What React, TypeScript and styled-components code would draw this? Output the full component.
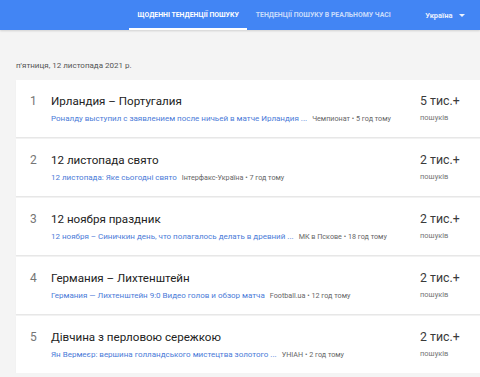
import styled, { createGlobalStyle } from "styled-components";

const GlobalStyle = createGlobalStyle`
  html, body {
    margin: 0;
    padding: 0;
    background: #f4f4f4;
    font-family: Roboto, "Noto Sans", Arial, sans-serif;
    overflow: hidden;
  }
`;

const Header = styled.header`
  height: 30px;
  background: #4285f4;
  display: flex;
  align-items: stretch;
  padding-left: 129px;
  box-shadow: 0 1px 2px rgba(0, 0, 0, 0.15);
`;

const Tab = styled.div<{ $active?: boolean }>`
  display: flex;
  align-items: center;
  padding: 0 8.5px;
  font-size: 6.9px;
  font-weight: 700;
  text-transform: uppercase;
  white-space: nowrap;
  color: ${(p) => (p.$active ? "#ffffff" : "rgba(255,255,255,0.72)")};
  border-bottom: 2px solid ${(p) => (p.$active ? "#ffffff" : "transparent")};
  box-sizing: border-box;
  padding-top: 1px;
`;

const Region = styled.div`
  display: flex;
  align-items: center;
  gap: 7px;
  margin-left: 26px;
  font-size: 7.5px;
  font-weight: 700;
  color: rgba(255, 255, 255, 0.9);
`;

const Main = styled.main`
  padding: 0 0 0 16px;
`;

const DateLine = styled.div`
  height: 50px;
  display: flex;
  align-items: flex-end;
  padding-bottom: 10px;
  box-sizing: border-box;
  font-size: 8px;
  color: #555;
`;

const List = styled.div`
  width: 480px;
  display: flex;
  flex-direction: column;
  gap: 2px;
`;

const Row = styled.div`
  height: 57px;
  background: #fff;
  display: grid;
  grid-template-columns: 35px 369px 1fr;
  align-items: start;
  box-shadow: 0 1px 1px rgba(0, 0, 0, 0.05);
  padding-top: 13px;
  box-sizing: border-box;
`;

const Index = styled.div`
  font-size: 12px;
  color: #757575;
  padding-left: 14px;
  line-height: 16px;
`;

const Info = styled.div`
  display: flex;
  flex-direction: column;
  gap: 4px;
  min-width: 0;
`;

const Title = styled.div`
  font-size: 11.6px;
  color: #222;
  line-height: 16px;
  white-space: nowrap;
`;

const Meta = styled.div`
  display: flex;
  align-items: baseline;
  gap: 5px;
  white-space: nowrap;
  line-height: 12px;
`;

const Link = styled.span`
  font-size: 8px;
  color: #4b7bd8;
`;

const Source = styled.span`
  font-size: 7.2px;
  color: #666;
`;

const Stat = styled.div`
  display: flex;
  flex-direction: column;
  gap: 3px;
`;

const Count = styled.div`
  font-size: 12.3px;
  color: #3a3a3a;
  line-height: 16px;
`;

const Label = styled.div`
  font-size: 7.5px;
  color: #757575;
  line-height: 12px;
`;

const items = [
  {
    title: "Ирландия – Португалия",
    link: "Роналду выступил с заявлением после ничьей в матче Ирландия ...",
    source: "Чемпионат • 5 год тому",
    count: "5 тис.+",
  },
  {
    title: "12 листопада свято",
    link: "12 листопада: Яке сьогодні свято",
    source: "Інтерфакс-Україна • 7 год тому",
    count: "2 тис.+",
  },
  {
    title: "12 ноября праздник",
    link: "12 ноября – Синичкин день, что полагалось делать в древний ...",
    source: "МК в Пскове • 18 год тому",
    count: "2 тис.+",
  },
  {
    title: "Германия – Лихтенштейн",
    link: "Германия — Лихтенштейн 9:0 Видео голов и обзор матча",
    source: "Football.ua • 12 год тому",
    count: "2 тис.+",
  },
  {
    title: "Дівчина з перловою сережкою",
    link: "Ян Вермеєр: вершина голландського мистецтва золотого ...",
    source: "УНІАН • 2 год тому",
    count: "2 тис.+",
  },
];

export default function App() {
  return (
    <>
      <GlobalStyle />
      <Header>
        <Tab $active>Щоденні тенденції пошуку</Tab>
        <Tab>Тенденції пошуку в реальному часі</Tab>
        <Region>
          Україна
          <svg width="6" height="3" viewBox="0 0 6 3">
            <path d="M0 0h6L3 3z" fill="rgba(255,255,255,0.9)" />
          </svg>
        </Region>
      </Header>
      <Main>
        <DateLine>п'ятниця, 12 листопада 2021 р.</DateLine>
        <List>
          {items.map((it, i) => (
            <Row key={i}>
              <Index>{i + 1}</Index>
              <Info>
                <Title>{it.title}</Title>
                <Meta>
                  <Link>{it.link}</Link>
                  <Source>{it.source}</Source>
                </Meta>
              </Info>
              <Stat>
                <Count>{it.count}</Count>
                <Label>пошуків</Label>
              </Stat>
            </Row>
          ))}
        </List>
      </Main>
    </>
  );
}
